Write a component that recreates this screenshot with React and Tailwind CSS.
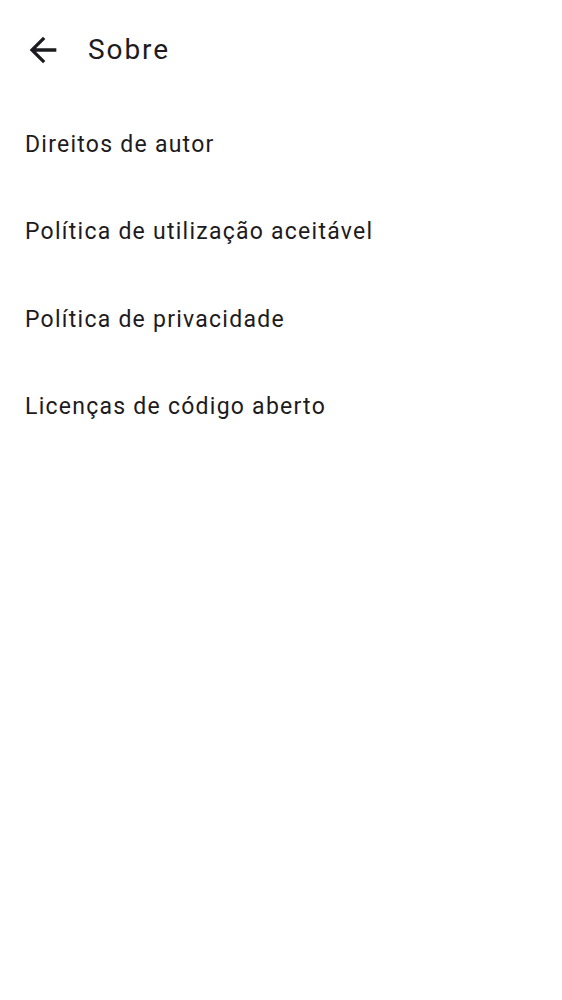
import React from 'react';

const items = [
  'Direitos de autor',
  'Política de utilização aceitável',
  'Política de privacidade',
  'Licenças de código aberto',
];

function BackArrow() {
  return (
    <svg viewBox="0 0 24 24" className="h-[40px] w-[40px]" fill="#1d1b20">
      <path d="M20 11H7.83l5.59-5.59L12 4l-8 8 8 8 1.41-1.41L7.83 13H20v-2z" />
    </svg>
  );
}

export default function App() {
  return (
    <div className="min-h-[1000px] w-full bg-white font-['Roboto',sans-serif] text-[#1d1b20]">
      <header className="flex h-[98px] items-center pl-[23px] pt-[2px]">
        <BackArrow />
        <h1 className="ml-[25px] text-[28px] leading-none tracking-[1.9px]">Sobre</h1>
      </header>
      <ul className="flex flex-col pt-[3px]">
        {items.map((item) => (
          <li key={item} className="flex h-[87.5px] items-center px-[25px] text-[23px] tracking-[1.25px]">
            {item}
          </li>
        ))}
      </ul>
    </div>
  );
}
